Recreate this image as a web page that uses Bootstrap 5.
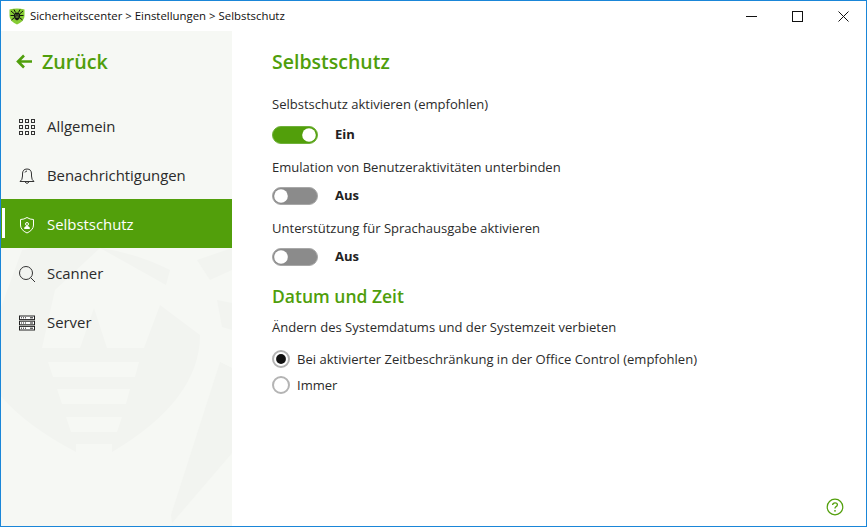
<!DOCTYPE html>
<html lang="de">
<head>
    <meta charset="UTF-8">
    <meta name="viewport" content="width=device-width, initial-scale=1.0">
    <title>Selbstschutz</title>
    <link href="https://cdn.jsdelivr.net/npm/bootstrap@5.3.0/dist/css/bootstrap.min.css" rel="stylesheet">
    <style>
        html, body { height: 100%; }
        body {
            background: #fff;
            font-family: "Open Sans", "Noto Sans", sans-serif;
            font-size: 13.04px;
            color: #2b2b2b;
            overflow: hidden;
        }
        .app-window {
            width: 867px;
            height: 527px;
            border: 1px solid #1a86d8;
        }
        .title-bar { height: 30px; color: #111; font-size: 11.4px; }
        .title-logo { margin-left: 8px; margin-right: 5px; }
        .win-btn { width: 46px; height: 30px; }
        .side-panel { width: 231px; background: #f6f8f4; }
        .side-mark { left: 0; top: 0; }
        .back-link {
            height: 70px;
            padding: 0 0 9px 15px;
            color: #4f9e0b;
            font-size: 19.7px;
            font-weight: 600;
            text-decoration: none;
        }
        .back-link svg { margin-right: 10px; }
        .side-item {
            height: 49px;
            padding: 2px 0 0 17px;
            color: #2b2b2b;
            font-size: 14.9px;
            text-decoration: none;
        }
        .side-item svg { margin-right: 11px; flex: none; }
        .side-item.is-active { background: #529f0b; color: #fff; }
        .side-item.is-active::before {
            content: "";
            position: absolute;
            left: 1px;
            top: 9px;
            width: 3px;
            height: 30px;
            background: #fff;
        }
        .main-pane { padding: 19px 0 0 40px; }
        .main-title { color: #4f9e0b; font-size: 19.5px; font-weight: 600; line-height: 24px; margin: 0 0 21px; }
        .sub-title { color: #4f9e0b; font-size: 17.5px; font-weight: 600; line-height: 24px; margin: 18px 0 10px; }
        .opt-label { line-height: 18px; }
        .switch-row { height: 18px; min-height: 0; margin: 11px 0 14px; }
        .switch-row.is-first { margin-top: 13px; }
        .switch-row .form-check-input {
            width: 46px;
            height: 18px;
            margin: 0;
            float: none;
            border: 1px solid #a8a8a8;
            background-color: #8b8b8b;
            background-image: url("data:image/svg+xml,%3csvg xmlns='http://www.w3.org/2000/svg' viewBox='-4 -4 8 8'%3e%3ccircle r='3.4' fill='%23fff'/%3e%3c/svg%3e");
            background-position: left center;
            box-shadow: none;
        }
        .switch-row .form-check-input:checked {
            border-color: #6fb13a;
            background-color: #529f0b;
            background-position: right center;
        }
        .switch-text { margin-left: 17px; font-weight: 700; color: #222; }
        .date-label { margin-bottom: 14px; }
        .radio-row { height: 18px; min-height: 0; margin: 0 0 8px; padding: 0; }
        .radio-row .form-check-input {
            float: none;
            width: 18px;
            height: 18px;
            margin: 0 7px 0 0;
            border: 2px solid #b4b4b4;
            background-color: #fff;
            box-shadow: none;
        }
        .radio-row .form-check-input:checked {
            background-color: #fff;
            border-color: #b4b4b4;
            background-image: url("data:image/svg+xml,%3csvg xmlns='http://www.w3.org/2000/svg' viewBox='-4 -4 8 8'%3e%3ccircle r='2.8' fill='%23111'/%3e%3c/svg%3e");
        }
        .radio-row .form-check-label { opacity: 1; line-height: 18px; }
        .help-icon { right: 22px; bottom: 10px; }
    </style>
</head>
<body>
    <div class="app-window d-flex flex-column">
        <!-- title bar -->
        <div class="title-bar d-flex align-items-center flex-shrink-0">
            <svg class="title-logo" width="16" height="17" viewBox="0 0 16 17">
                <path d="M.5 1.5 Q8 -.5 15.5 1.5 L15.5 8 Q15.5 13 8 16.5 Q.5 13 .5 8Z" fill="#86cc34"/>
                <path d="M8 12.5 Q5 11 4.8 8 Q4.8 4.5 8 4.5 Q11.2 4.5 11.2 8 Q11 11 8 12.5Z" fill="#111"/>
                <path d="M2 3 L5.5 6M14 3 L10.5 6M1.5 7.5h3.5M14.5 7.5h-3.5M2.5 12 L5.5 9.5M13.5 12 L10.5 9.5M5 1.5 L6.5 4.5M11 1.5 L9.5 4.5" stroke="#111" stroke-width="1" fill="none"/>
                <path d="M6.3 7h1.2M8.5 7h1.2M6.5 9h3" stroke="#9fe04a" stroke-width=".9"/>
            </svg>
            <span>Sicherheitscenter &gt; Einstellungen &gt; Selbstschutz</span>
            <div class="ms-auto d-flex">
                <div class="win-btn d-flex align-items-center justify-content-center">
                    <svg width="11" height="11" viewBox="0 0 11 11"><path d="M0 5.5h11" stroke="#111"/></svg>
                </div>
                <div class="win-btn d-flex align-items-center justify-content-center">
                    <svg width="11" height="11" viewBox="0 0 11 11"><rect x=".5" y=".5" width="10" height="10" fill="none" stroke="#111"/></svg>
                </div>
                <div class="win-btn d-flex align-items-center justify-content-center">
                    <svg width="11" height="11" viewBox="0 0 11 11"><path d="M.5 .5l10 10M10.5 .5l-10 10" stroke="#111"/></svg>
                </div>
            </div>
        </div>

        <div class="d-flex flex-grow-1 position-relative">
            <!-- sidebar -->
            <div class="side-panel position-relative flex-shrink-0">
                <svg class="side-mark position-absolute" width="231" height="495" viewBox="1 31 231 495">
                    <path fill="#f2f4f0" fill-rule="evenodd" d="M0 310 L22 250 Q100 235 170 270 L166 285 L100 248 L55 290 L42 348 L80 348 L94 308 L107 348 L144 348 L160 305 L200 335 Q200 400 112 452 L112 444 L76 444 L76 452 Q25 425 0 395Z M48 362 L139 362 L135 377 L53 377Z M57 389 L130 389 L126 404 L62 404Z M66 417 L122 417 L117 432 L71 432Z"/>
                    <path fill="#f2f4f0" d="M197 260 L232 248 L232 270 L210 280Z M217 300 L232 303 L232 330 L222 327Z"/>
                    <path fill="#f2f4f0" d="M220 362 L232 368 L232 453 L172 523 L171 515Z"/>
                </svg>
                <div class="position-relative">
                    <a class="back-link d-flex align-items-center" href="#">
                        <svg width="16" height="15" viewBox="0 0 16 15"><path d="M8 1.5 L2 7.5 L8 13.5M2 7.5H16" fill="none" stroke="#4f9e0b" stroke-width="2.6"/></svg>
                        Zurück
                    </a>
                    <nav>
                        <a class="side-item d-flex align-items-center" href="#">
                            <svg width="18" height="18" viewBox="0 0 18 18" fill="none" stroke="#333"><rect x="1.5" y="1.5" width="3" height="3"/><rect x="7.5" y="1.5" width="3" height="3"/><rect x="13.5" y="1.5" width="3" height="3"/><rect x="1.5" y="7.5" width="3" height="3"/><rect x="7.5" y="7.5" width="3" height="3"/><rect x="13.5" y="7.5" width="3" height="3"/><rect x="1.5" y="13.5" width="3" height="3"/><rect x="7.5" y="13.5" width="3" height="3"/><rect x="13.5" y="13.5" width="3" height="3"/></svg>
                            Allgemein
                        </a>
                        <a class="side-item d-flex align-items-center" href="#">
                            <svg width="18" height="18" viewBox="0 0 18 18" fill="none" stroke="#333"><path d="M2 14.5 Q4.5 13 4.5 9 L4.5 7 Q4.5 2 9 2 Q13.5 2 13.5 7 L13.5 9 Q13.5 13 16 14.5Z"/><path d="M7 15 Q9 18 11 15M7 5.5 Q7.5 4 9 4"/></svg>
                            Benachrichtigungen
                        </a>
                        <a class="side-item is-active d-flex align-items-center position-relative" href="#">
                            <svg width="18" height="18" viewBox="0 0 18 18" fill="none" stroke="#fff"><path d="M9 1.5 Q12 3.5 15.5 3.5 L15.5 9 Q15.5 14 9 17 Q2.5 14 2.5 9 L2.5 3.5 Q6 3.5 9 1.5Z"/><circle cx="9" cy="8" r="1.5"/><path d="M6.5 12.5 Q6.5 10.5 9 10.5 Q11.5 10.5 11.5 12.5Z" fill="#fff"/></svg>
                            Selbstschutz
                        </a>
                        <a class="side-item d-flex align-items-center" href="#">
                            <svg width="18" height="18" viewBox="0 0 18 18" fill="none" stroke="#333"><circle cx="8" cy="8" r="6.5"/><path d="M12.7 12.7 L17 17"/></svg>
                            Scanner
                        </a>
                        <a class="side-item d-flex align-items-center" href="#">
                            <svg width="18" height="16" viewBox="0 0 18 16" fill="none" stroke="#222"><rect x="1.5" y="1" width="15" height="3.6" fill="#fff"/><rect x="1.5" y="6.2" width="15" height="3.6" fill="#fff"/><rect x="1.5" y="11.4" width="15" height="3.6" fill="#fff"/><path d="M3 2.8h6M3 8h6M3 13.2h6" stroke-dasharray="1 1"/><path d="M12 2.8h3M12 8h3M12 13.2h3"/></svg>
                            Server
                        </a>
                    </nav>
                </div>
            </div>

            <!-- content -->
            <div class="main-pane flex-grow-1">
                <h1 class="main-title">Selbstschutz</h1>

                <div class="opt-label">Selbstschutz aktivieren (empfohlen)</div>
                <div class="switch-row is-first form-check form-switch d-flex align-items-center p-0">
                    <input class="form-check-input" type="checkbox" role="switch" id="sw1" checked>
                    <label class="switch-text" for="sw1">Ein</label>
                </div>

                <div class="opt-label">Emulation von Benutzeraktivitäten unterbinden</div>
                <div class="switch-row form-check form-switch d-flex align-items-center p-0">
                    <input class="form-check-input" type="checkbox" role="switch" id="sw2">
                    <label class="switch-text" for="sw2">Aus</label>
                </div>

                <div class="opt-label">Unterstützung für Sprachausgabe aktivieren</div>
                <div class="switch-row form-check form-switch d-flex align-items-center p-0">
                    <input class="form-check-input" type="checkbox" role="switch" id="sw3">
                    <label class="switch-text" for="sw3">Aus</label>
                </div>

                <h2 class="sub-title">Datum und Zeit</h2>
                <div class="opt-label date-label">Ändern des Systemdatums und der Systemzeit verbieten</div>

                <div class="radio-row form-check d-flex align-items-center">
                    <input class="form-check-input" type="radio" name="zeit" id="r1" checked>
                    <label class="form-check-label" for="r1">Bei aktivierter Zeitbeschränkung in der Office Control (empfohlen)</label>
                </div>
                <div class="radio-row form-check d-flex align-items-center">
                    <input class="form-check-input" type="radio" name="zeit" id="r2">
                    <label class="form-check-label" for="r2">Immer</label>
                </div>
            </div>

            <svg class="help-icon position-absolute" width="18" height="18" viewBox="0 0 18 18">
                <circle cx="9" cy="9" r="7.8" fill="none" stroke="#529f0b" stroke-width="1.2"/>
                <path d="M6.6 7 Q6.8 4.8 9 4.8 Q11.4 4.8 11.4 6.8 Q11.4 8 9.8 8.8 Q9 9.3 9 10.6" fill="none" stroke="#529f0b" stroke-width="1.3"/>
                <circle cx="9" cy="12.8" r=".9" fill="#529f0b"/>
            </svg>
        </div>
    </div>
    <script src="https://cdn.jsdelivr.net/npm/bootstrap@5.3.0/dist/js/bootstrap.bundle.min.js"></script>
</body>
</html>
